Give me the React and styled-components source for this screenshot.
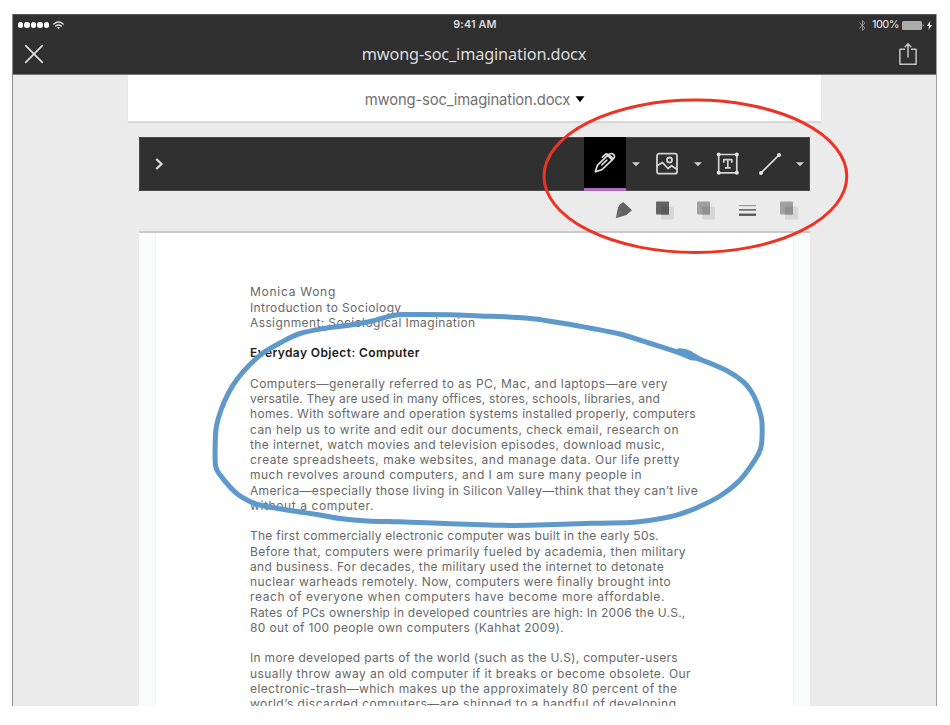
import React, { useLayoutEffect, useRef } from "react";
import styled, { createGlobalStyle } from "styled-components";

const GlobalStyle = createGlobalStyle`
  * { box-sizing: border-box; }
  body { margin: 0; background: #fefefe; }
`;

const Page = styled.div`
  position: relative;
  width: 950px;
  height: 725px;
  padding: 14px 13px 0 12px;
  overflow: hidden;
  background: #fefefe;
  font-family: Inter, "Liberation Sans", sans-serif;
`;

const Device = styled.div`
  display: flex;
  flex-direction: column;
  height: 691.5px;
  overflow: hidden;
  background: #ebebeb;
  border-left: 1px solid #8c8c8c;
  border-right: 1px solid #a0a0a0;
`;

const Header = styled.header`
  flex: none;
  height: 61px;
  margin: 0 -1px;
  background: #303030;
  border: 1px solid #555;
  border-bottom-color: #777;
  color: #dcdcdc;
`;

const HeaderRow = styled.div`
  display: grid;
  grid-template-columns: 1fr auto 1fr;
  align-items: center;
  height: ${(p) => p.$height}px;
  padding: ${(p) => p.$padding};
`;

const Cluster = styled.div`
  display: flex;
  align-items: center;
  justify-content: ${(p) => (p.$end ? "flex-end" : "flex-start")};
  gap: ${(p) => p.$gap || 0}px;
`;

const Dot = styled.i`
  width: 5.4px;
  height: 5.4px;
  border-radius: 50%;
  background: #fff;
`;

const Label = styled.span`
  display: block;
  width: max-content;
  white-space: pre;
  font-family: ${(p) => p.$family || "inherit"};
  font-size: ${(p) => p.$size}px;
  font-weight: ${(p) => p.$weight || 400};
  line-height: ${(p) => p.$leading || 20}px;
  color: ${(p) => p.$color || "inherit"};
`;

const FileBar = styled.div`
  flex: none;
  display: flex;
  align-items: center;
  justify-content: center;
  gap: 5px;
  width: 693px;
  height: 46px;
  margin-left: 115px;
  padding: 3px 0 0 1px;
  background: #fff;
  box-shadow: 0 2px 1px #d9d9d9;
`;

const Viewer = styled.main`
  flex: none;
  width: 671px;
  height: 569px;
  margin: 16px 0 0 126px;
`;

const Toolbar = styled.div`
  display: flex;
  align-items: stretch;
  height: 54px;
  background: #303030;
  box-shadow: inset 0 0 0 1px #484848;
`;

const Expand = styled.button`
  display: flex;
  align-items: center;
  flex: 1;
  padding: 0 0 0 16px;
  border: 0;
  background: none;
`;

const Tool = styled.button`
  display: flex;
  align-items: center;
  justify-content: center;
  flex: none;
  width: ${(p) => p.$width}px;
  padding: 0;
  border: 0;
  background: ${(p) => (p.$active ? "#000" : "transparent")};
  box-shadow: ${(p) => (p.$active ? "inset 0 -3px #ab6dbf" : "none")};
`;

const Options = styled.div`
  display: grid;
  grid-template-columns: repeat(5, 41.5px);
  justify-content: end;
  justify-items: center;
  align-items: center;
  height: 42px;
  padding-bottom: 3px;
  border-bottom: 2px solid #c9c9c9;
`;

const Backdrop = styled.div`
  height: 473px;
  padding: 0 17px;
  background: #fafcfb;
`;

const Sheet = styled.article`
  height: 100%;
  padding: 51.3px 0 0 94px;
  overflow: hidden;
  background: #fff;
  box-shadow: 0 0 1px #ccc;
  color: #686868;
`;

const Paragraph = styled.section`
  margin-bottom: 15.25px;
`;

const Icon = styled.svg`
  display: block;
  flex: none;
  overflow: visible;
  fill: none;
  stroke: ${(p) => p.$color || "#dedede"};
  stroke-width: ${(p) => p.$stroke || 1.8};
  stroke-linecap: round;
  stroke-linejoin: round;
`;

const Ink = styled.svg`
  position: absolute;
  inset: 0;
  pointer-events: none;
`;

/* Spaces the letters so that the label spans the given width. */
function FitLabel({ text, width, ...rest }) {
  const ref = useRef(null);
  useLayoutEffect(() => {
    const el = ref.current;
    el.style.letterSpacing = "0px";
    const natural = el.getBoundingClientRect().width;
    el.style.letterSpacing = `${(width - natural) / text.length}px`;
  }, [text, width]);
  return <Label ref={ref} {...rest}>{text}</Label>;
}

const Caret = () => (
  <Icon width="8" height="5" viewBox="0 0 8 5">
    <path d="M0 .3h8L4 4.3z" fill="#cfcfcf" stroke="none" />
  </Icon>
);

const Layers = ({ front, overlap }) => (
  <Icon width="18" height="18" viewBox="0 0 18 18">
    <g stroke="none">
      <rect x="5" y="5.5" width="13" height="13" rx=".8" fill="#d6d6d6" />
      <rect y=".5" width="13" height="13" rx=".8" fill={front} />
      <path d="M5 5.5h8v8H5z" fill={overlap} />
    </g>
  </Icon>
);

/* Points of the freehand loop, in drawing order. */
const stroke = [
  [700, 359.3], [673, 350.7], [649, 343], [620, 334], [592, 328.5], [563, 323.3], [533, 318.7],
  [505, 316.8], [480, 316], [450, 314.7], [407, 314.5], [393, 315.5], [370, 321.5], [347, 325.5],
  [327, 328], [300, 333.5], [280, 343], [263, 353], [250, 364.5], [238, 378], [229, 392],
  [221, 410], [216.5, 426], [215.3, 440], [215.6, 466], [221, 476], [230, 487], [238, 494.5],
  [247, 500], [256, 504], [267, 506.5], [290, 510.5], [317, 514.5], [340, 518.5], [367, 521],
  [400, 521.8], [433, 523], [467, 524.3], [500, 525.3], [530, 525.3], [593, 523.3], [630, 522.5],
  [652, 520], [670, 516.7], [682, 513.3], [697, 507.7], [720, 496], [740, 480], [755, 460],
  [760.5, 449], [762, 438], [761.7, 420], [757, 403], [751, 391], [743, 381.5], [727, 370.7],
];

/* Turns a closed run of points into a smooth cubic path. */
function smoothLoop(points) {
  const n = points.length;
  const at = (i) => points[(i + n) % n];
  let d = `M${at(0)}`;
  for (let i = 0; i < n; i += 1) {
    const [a, b, c, e] = [at(i - 1), at(i), at(i + 1), at(i + 2)];
    const c1 = [b[0] + (c[0] - a[0]) / 6, b[1] + (c[1] - a[1]) / 6];
    const c2 = [c[0] - (e[0] - b[0]) / 6, c[1] - (e[1] - b[1]) / 6];
    d += `C${c1} ${c2} ${c}`;
  }
  return `${d}Z`;
}

const paragraphs = [
  [["Monica Wong", 86], ["Introduction to Sociology", 151.5], ["Assignment: Sociological Imagination", 225.5]],
  [["Everyday Object: Computer", 170, true]],
  [
    ["Computers—generally referred to as PC, Mac, and laptops—are very", 418],
    ["versatile. They are used in many offices, stores, schools, libraries, and", 410],
    ["homes. With software and operation systems installed properly, computers", 446],
    ["can help us to write and edit our documents, check email, research on", 429],
    ["the internet, watch movies and television episodes, download music,", 415],
    ["create spreadsheets, make websites, and manage data. Our life pretty", 430],
    ["much revolves around computers, and I am sure many people in", 392],
    ["America—especially those living in Silicon Valley—think that they can’t live", 448],
    ["without a computer.", 124],
  ],
  [
    ["The first commercially electronic computer was built in the early 50s.", 409],
    ["Before that, computers were primarily fueled by academia, then military", 436],
    ["and business. For decades, the military used the internet to detonate", 414],
    ["nuclear warheads remotely. Now, computers were finally brought into", 421],
    ["reach of everyone when computers have become more affordable.", 415],
    ["Rates of PCs ownership in developed countries are high: In 2006 the U.S.,", 435.5],
    ["80 out of 100 people own computers (Kahhat 2009).", 314],
  ],
  [
    ["In more developed parts of the world (such as the U.S), computer-users", 428],
    ["usually throw away an old computer if it breaks or become obsolete. Our", 441],
    ["electronic-trash—which makes up the approximately 80 percent of the", 427.5],
    ["world’s discarded computers—are shipped to a handful of developing", 426.5],
  ],
];

export default function App() {
  return (
    <Page>
      <GlobalStyle />
      <Device>
        <Header>
          <HeaderRow $height={18} $padding="0 4px 0 5px">
            <Cluster $gap={4}>
              <Cluster $gap={1}>
                <Dot /><Dot /><Dot /><Dot /><Dot />
              </Cluster>
              <Icon width="11" height="9" viewBox="0 0 11 9" $stroke={1.5}>
                <path d="M.8 3Q5.5-1 10.2 3M2.7 5Q5.5 2.8 8.3 5" />
                <path d="M4 6.5Q5.5 5.5 7 6.5L5.5 8.3z" fill="#dedede" stroke="none" />
              </Icon>
            </Cluster>
            <FitLabel text="9:41 AM" width={43.5} $size={10.8} $weight={600} />
            <Cluster $end>
              <Icon width="7" height="11" viewBox="0 0 7 11" $stroke={1} $color="#999">
                <path d="M.7 3l5.2 5-2.5 2.4V.6L5.9 3 .7 8" />
              </Icon>
              <Label $size={10.5} $weight={500}>{"  "}</Label>
              <FitLabel text="100%" width={27} $size={10.8} $weight={500} />
              <Icon width="33" height="9" viewBox="0 0 33 9">
                <g stroke="none">
                  <rect x="3" y="0" width="20" height="9" rx="1.5" fill="#acacac" />
                  <path d="M23.7 3q2 1.5 0 3z" fill="#c6c6c6" />
                  <path d="M31.3 0l-3.4 5h2.2l-.6 4 3.5-5h-2.2z" fill="#eee" />
                </g>
              </Icon>
            </Cluster>
          </HeaderRow>
          <HeaderRow $height={41} $padding="1px 13px 0 12px">
            <Icon width="18" height="18" viewBox="0 0 18 18" $stroke={1.7}>
              <path d="M.7.7l16.6 16.6M17.3.7L.7 17.3" />
            </Icon>
            <FitLabel text="mwong-soc_imagination.docx" width={224.5} $family='"Noto Sans", sans-serif' $size={16.3} />
            <Cluster $end>
              <Icon width="24" height="22" viewBox="0 0 24 22" $stroke={1.5} $color="#c4c4c4">
                <path d="M5.5 6.2H.9v15h16.2v-15h-4.6M9 14V1.2M6.2 3.8l2.8-3 2.8 3" />
              </Icon>
            </Cluster>
          </HeaderRow>
        </Header>

        <FileBar>
          <FitLabel text="mwong-soc_imagination.docx" width={205.5} $size={14.8} $color="#707070" />
          <Icon width="10" height="7" viewBox="0 0 10 7">
            <path d="M.5 .2h9L5 6.2z" fill="#000" stroke="none" />
          </Icon>
        </FileBar>

        <Viewer>
          <Toolbar>
            <Expand aria-label="Expand">
              <Icon width="8" height="13" viewBox="0 0 8 13" $stroke={2.2}>
                <path d="M1.3 1l5.2 5-5.2 5" strokeLinecap="butt" strokeLinejoin="miter" />
              </Icon>
            </Expand>
            <Tool $width={42} $active aria-label="Draw">
              <Icon width="24" height="24" viewBox="0 0 24 24" $stroke={1.7}>
                <path d="M2.4 19.8l1.9-6.4L14.6 3.4l4.6 4.4L8.9 17.6zM8.8 13l5-4.8" />
                <path d="M14.8 3.2q1.6-1.7 3.6-1.7 3 .3 3.1 3-.1 1.6-2 3.2zM9.4 5.2l3.6-3.4 2.2.8" />
                <path d="M16.8 3.5l2.6 2.4" />
              </Icon>
            </Tool>
            <Tool $width={20} aria-label="Draw options"><Caret /></Tool>
            <Tool $width={42} aria-label="Image">
              <Icon width="22" height="22" viewBox="0 0 22 22" $color="#d4d4d4">
                <rect x="1" y=".7" width="20" height="20" rx="2" />
                <circle cx="13.5" cy="7" r="2.5" />
                <path d="M1.5 12.5l5-3 5.5 6 3.5-2.8 5 3.3" />
              </Icon>
            </Tool>
            <Tool $width={20} aria-label="Image options"><Caret /></Tool>
            <Tool $width={41} aria-label="Text">
              <Icon width="23" height="22" viewBox="0 0 23 22" $stroke={1.7} $color="#d4d4d4">
                <path d="M3 1.5h15.5M3 19.8h15.5M1.7 3v15.5M19.8 3v15.5" strokeLinecap="butt" />
                <g fill="#e4e4e4" stroke="none">
                  <circle cx="1.7" cy="1.6" r="2" /><circle cx="19.8" cy="1.6" r="2" />
                  <circle cx="1.7" cy="19.8" r="2" /><circle cx="19.8" cy="19.8" r="2" />
                </g>
                <path d="M6.8 8.8V6.6h8v2.2M10.8 6.6v8M8.8 14.8h4" strokeLinecap="square" />
              </Icon>
            </Tool>
            <Tool $width={41} aria-label="Line">
              <Icon width="22" height="22" viewBox="0 0 22 22" $stroke={1.7}>
                <path d="M2 20L20 2" />
                <g fill="#e4e4e4" stroke="none">
                  <circle cx="2" cy="20" r="2" /><circle cx="20" cy="2" r="2" />
                </g>
              </Icon>
            </Tool>
            <Tool $width={20} aria-label="Line options"><Caret /></Tool>
          </Toolbar>
          <Options>
            <Icon width="17" height="17" viewBox="0 0 17 17">
              <path d="M8.2 1q-4 2.4-5.2 5.8L.8 17.2l10.6-3.2L17 9.2z" fill="#636363" stroke="none" />
              <path d="M1.4 16.4l4.6-6" stroke="#8a8a8a" strokeWidth=".8" />
            </Icon>
            <Layers front="#646464" overlap="#5a5a5a" />
            <Layers front="#a0a0a0" overlap="#909090" />
            <Icon width="17" height="12" viewBox="0 0 17 12">
              <g stroke="none">
                <path d="M0 1h17v1.2H0z" fill="#999" />
                <path d="M0 5h17v1.7H0z" fill="#707070" />
                <path d="M0 9.6h17v2.3H0z" fill="#555" />
              </g>
            </Icon>
            <Layers front="#a0a0a0" overlap="#909090" />
          </Options>
          <Backdrop>
            <Sheet>
              {paragraphs.map((lines, i) => (
                <Paragraph key={i}>
                  {lines.map(([text, width, bold]) => (
                    <FitLabel
                      key={text}
                      text={text}
                      width={width}
                      $size={12}
                      $leading={15.25}
                      $weight={bold ? 600 : 400}
                      $color={bold ? "#1c1c1c" : undefined}
                    />
                  ))}
                </Paragraph>
              ))}
            </Sheet>
          </Backdrop>
        </Viewer>
      </Device>

      <Ink width="950" height="725" viewBox="0 0 950 725" fill="none">
        <path d={smoothLoop(stroke)} stroke="#5f98cb" strokeWidth="5" strokeLinejoin="round" />
        <path d="M678 348.3Q685 347.7 691 351L704 359Q697 361.5 690 360L675 353.5Z" fill="#5f98cb" />
        <ellipse cx="695.4" cy="176.3" rx="151.4" ry="76.2" stroke="#ec3425" strokeWidth="3" />
      </Ink>
    </Page>
  );
}
